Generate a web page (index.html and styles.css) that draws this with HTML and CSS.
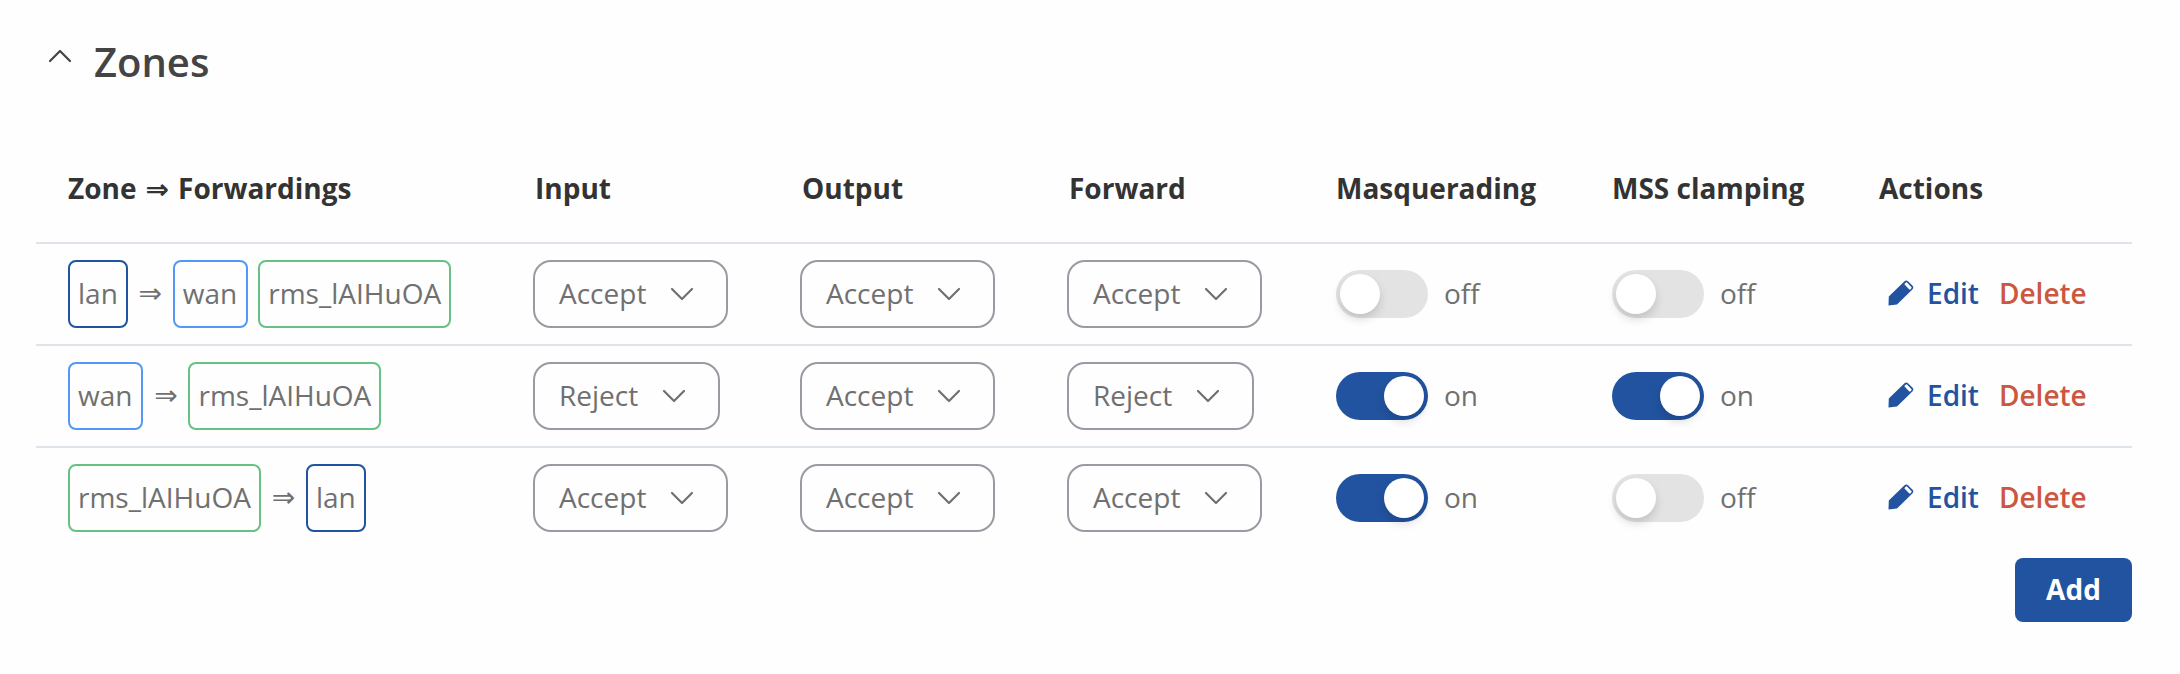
FILE: index.html
```html
<!DOCTYPE html>
<html lang="en">
<head>
  <meta charset="UTF-8">
  <meta name="viewport" content="width=device-width, initial-scale=1.0">
  <title>Zones</title>
  <link rel="stylesheet" href="styles.css">
</head>
<body>
  <!-- Shared icons -->
  <svg class="sprite" aria-hidden="true">
    <symbol id="chevron" viewBox="0 0 24 14">
      <path d="M2 2l10 10L22 2" fill="none" stroke="currentColor" stroke-width="2.2" stroke-linecap="round" stroke-linejoin="round"/>
    </symbol>
    <symbol id="pencil" viewBox="0 0 26 26">
      <path fill="currentColor" fill-rule="evenodd" d="M0.5 25.5L0.8 16.5L16.5 1.2Q18.3-.3 20 1.2L24.6 5.8Q26 7.5 24.6 9.2L9 24.6ZM16.3 4.3L21.3 9.4Q22.1 9.8 22.8 9L23.4 8.2Q23.9 7.5 23.3 6.9L19 2.6Q18.3 2 17.6 2.7Z"/>
    </symbol>
  </svg>

  <main class="zones">
    <h2 class="title">
      <svg class="collapse"><use href="#chevron"/></svg>
      Zones
    </h2>

    <table class="zone-table">
      <colgroup>
        <col class="col-zone">
        <col class="col-policy">
        <col class="col-policy">
        <col class="col-forward">
        <col class="col-masq">
        <col class="col-mss">
        <col>
      </colgroup>
      <thead>
        <tr>
          <th>Zone <span class="arrow">⇒</span> Forwardings</th>
          <th class="policy">Input</th>
          <th class="policy">Output</th>
          <th class="policy">Forward</th>
          <th>Masquerading</th>
          <th>MSS clamping</th>
          <th>Actions</th>
        </tr>
      </thead>
      <tbody>
        <tr>
          <td>
            <div class="forwardings">
              <span class="badge lan">lan</span>
              <span class="arrow">⇒</span>
              <span class="badge wan">wan</span>
              <span class="badge rms">rms_lAIHuOA</span>
            </div>
          </td>
          <td><button class="select">Accept<svg><use href="#chevron"/></svg></button></td>
          <td><button class="select">Accept<svg><use href="#chevron"/></svg></button></td>
          <td><button class="select">Accept<svg><use href="#chevron"/></svg></button></td>
          <td><label class="toggle"><span class="switch"></span><span class="state">off</span></label></td>
          <td><label class="toggle"><span class="switch"></span><span class="state">off</span></label></td>
          <td>
            <div class="actions">
              <a class="edit"><svg><use href="#pencil"/></svg>Edit</a>
              <a class="delete">Delete</a>
            </div>
          </td>
        </tr>
        <tr>
          <td>
            <div class="forwardings">
              <span class="badge wan">wan</span>
              <span class="arrow">⇒</span>
              <span class="badge rms">rms_lAIHuOA</span>
            </div>
          </td>
          <td><button class="select">Reject<svg><use href="#chevron"/></svg></button></td>
          <td><button class="select">Accept<svg><use href="#chevron"/></svg></button></td>
          <td><button class="select">Reject<svg><use href="#chevron"/></svg></button></td>
          <td><label class="toggle"><span class="switch on"></span><span class="state">on</span></label></td>
          <td><label class="toggle"><span class="switch on"></span><span class="state">on</span></label></td>
          <td>
            <div class="actions">
              <a class="edit"><svg><use href="#pencil"/></svg>Edit</a>
              <a class="delete">Delete</a>
            </div>
          </td>
        </tr>
        <tr>
          <td>
            <div class="forwardings">
              <span class="badge rms">rms_lAIHuOA</span>
              <span class="arrow">⇒</span>
              <span class="badge lan">lan</span>
            </div>
          </td>
          <td><button class="select">Accept<svg><use href="#chevron"/></svg></button></td>
          <td><button class="select">Accept<svg><use href="#chevron"/></svg></button></td>
          <td><button class="select">Accept<svg><use href="#chevron"/></svg></button></td>
          <td><label class="toggle"><span class="switch on"></span><span class="state">on</span></label></td>
          <td><label class="toggle"><span class="switch"></span><span class="state">off</span></label></td>
          <td>
            <div class="actions">
              <a class="edit"><svg><use href="#pencil"/></svg>Edit</a>
              <a class="delete">Delete</a>
            </div>
          </td>
        </tr>
      </tbody>
    </table>

    <div class="footer">
      <button class="add">Add</button>
    </div>
  </main>
</body>
</html>
```
FILE: styles.css
```css
* {
  box-sizing: border-box;
}
body {
  margin: 0;
  background: #fefefe;
  color: #707070;
  font-family: "Open Sans", sans-serif;
  font-size: 28px;
  line-height: 38px;
}
button {
  font: inherit;
  cursor: pointer;
}
.sprite {
  display: block;
  width: 0;
  height: 0;
}
.zones {
  padding: 34px 48px 0 36px;
}
.title {
  display: flex;
  align-items: flex-start;
  gap: 22px;
  margin: 0;
  padding-left: 12px;
  height: 100px;
  color: #444;
  font-size: 40px;
  font-weight: 600;
  line-height: 56px;
}
.collapse {
  width: 24px;
  height: 14px;
  margin-top: 15px;
  transform: rotate(180deg);
}

/* Table */
.zone-table {
  width: 100%;
  table-layout: fixed;
  border-collapse: separate;
  border-spacing: 0;
}
.col-zone {
  width: 497px;
}
.col-policy {
  width: 267px;
}
.col-forward {
  width: 269px;
}
.col-masq {
  width: 276px;
}
.col-mss {
  width: 267px;
}
th {
  height: 108px;
  padding: 0 0 1px;
  color: #333;
  font-weight: 700;
  text-align: left;
  white-space: nowrap;
}
.policy {
  padding-left: 2px;
}
td {
  height: 102px;
  padding: 16px 0;
  border-top: 2px solid #dfe4ea;
}
th:first-child,
td:first-child {
  padding-left: 32px;
}
.arrow {
  font-family: "DejaVu Sans", sans-serif;
}
th .arrow {
  display: inline-block;
  width: 27px;
  line-height: 1;
  text-align: center;
}
.forwardings {
  display: flex;
  align-items: center;
}
.forwardings .arrow {
  width: 45px;
  text-align: center;
}
.badge {
  height: 68px;
  padding: 12px 8px;
  border: 2px solid;
  border-radius: 8px;
  color: #707070;
}
.badge + .badge {
  margin-left: 10px;
}
.badge.lan {
  border-color: #2253a0;
}
.badge.wan {
  padding-right: 9px;
  border-color: #5398f7;
}
.badge.rms {
  border-color: #66c283;
}
.select {
  display: flex;
  align-items: center;
  gap: 24px;
  height: 68px;
  padding: 0 32px 2px 24px;
  border: 2px solid #999ba3;
  border-radius: 18px;
  background: transparent;
  color: #707070;
}
.select svg {
  width: 24px;
  height: 14px;
  margin-top: 2px;
}

/* Switches */
.toggle {
  display: flex;
  align-items: center;
  gap: 16px;
}
.state {
  padding-bottom: 2px;
}
.switch {
  width: 92px;
  height: 48px;
  padding: 4px;
  border-radius: 24px;
  background: #e3e3e3;
}
.switch::before {
  content: "";
  display: block;
  width: 40px;
  height: 40px;
  border-radius: 50%;
  background: #fff;
  box-shadow: 0 5px 10px rgba(0, 0, 0, 0.15);
}
.switch.on {
  background: #2253a0;
}
.switch.on::before {
  margin-left: auto;
}

/* Row actions */
.actions {
  display: flex;
  padding: 0 0 2px 9px;
  font-weight: 600;
}
.edit {
  display: flex;
  align-items: center;
  color: #2253a0;
}
.edit svg {
  width: 26px;
  height: 26px;
  margin-right: 13px;
}
.delete {
  margin-left: 20px;
  color: #cc5640;
}
.footer {
  display: flex;
  justify-content: flex-end;
  padding-top: 10px;
}
.add {
  width: 117px;
  height: 64px;
  padding: 0 0 2px;
  border: none;
  border-radius: 8px;
  background: #2253a0;
  color: #fff;
  font-weight: 700;
}
```
